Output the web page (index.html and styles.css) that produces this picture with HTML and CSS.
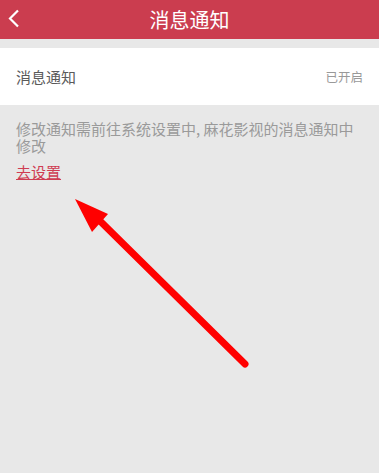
FILE: index.html
```html
<!DOCTYPE html>
<html lang="zh-CN">
<head>
  <meta charset="UTF-8" />
  <meta name="viewport" content="width=device-width, initial-scale=1.0"/>
  <title>消息通知</title>
  <link rel="stylesheet" href="styles.css">
</head>
<body>

<header class="topbar">
  <a class="back" href="#">
    <svg width="12" height="19" viewBox="0 0 12 19">
      <path d="M10 1.5 L2 9.5 L10 17.5" fill="none" stroke="#fff" stroke-width="2.2"/>
    </svg>
  </a>
  <h1>消息通知</h1>
</header>

<!-- SETTING ROW -->
<section class="setting">
  <span class="label">消息通知</span>
  <span class="state">已开启</span>
</section>

<!-- NOTICE -->
<section class="notice">
  <p>修改通知需前往系统设置中, 麻花影视的消息通知中修改</p>
  <a href="#" class="go">去设置</a>
</section>

<!-- annotation arrow -->
<svg class="arrow" width="379" height="473" viewBox="0 0 379 473">
  <line x1="245" y1="364" x2="97" y2="218" stroke="#ff0000" stroke-width="7" stroke-linecap="round"/>
  <polygon points="75,199 108,214 92,232" fill="#ff0000"/>
</svg>

</body>
</html>
```

FILE: styles.css
```css
*{
  margin:0;
  padding:0;
  box-sizing:border-box;
  font-family: "Noto Sans CJK SC", "Noto Sans", sans-serif;
}

body{
  background:#e8e8e8;
  width:379px;
  height:473px;
  position:relative;
  overflow:hidden;
}

.topbar{
  background:#cb3d4f;
  height:39px;
  display:flex;
  align-items:center;
  justify-content:center;
  position:relative;
}

.topbar h1{
  color:white;
  font-size:20px;
  font-weight:normal;
  line-height:39px;
}

.back{
  position:absolute;
  left:8px;
  top:9px;
  display:flex;
}

.setting{
  background:white;
  margin-top:9px;
  height:57px;
  padding:0 16px;
  display:flex;
  align-items:center;
  justify-content:space-between;
}

.setting .label{
  font-size:15px;
  color:#5a5a5a;
}

.setting .state{
  font-size:12.5px;
  color:#999;
}

.notice{
  padding:15px 16px;
}

.notice p{
  font-size:15px;
  line-height:17px;
  color:#9a9a9a;
}

.go{
  display:inline-block;
  margin-top:7px;
  font-size:15px;
  color:#cf3c52;
  text-decoration:underline;
}

.arrow{
  position:absolute;
  left:0;
  top:0;
}
```
